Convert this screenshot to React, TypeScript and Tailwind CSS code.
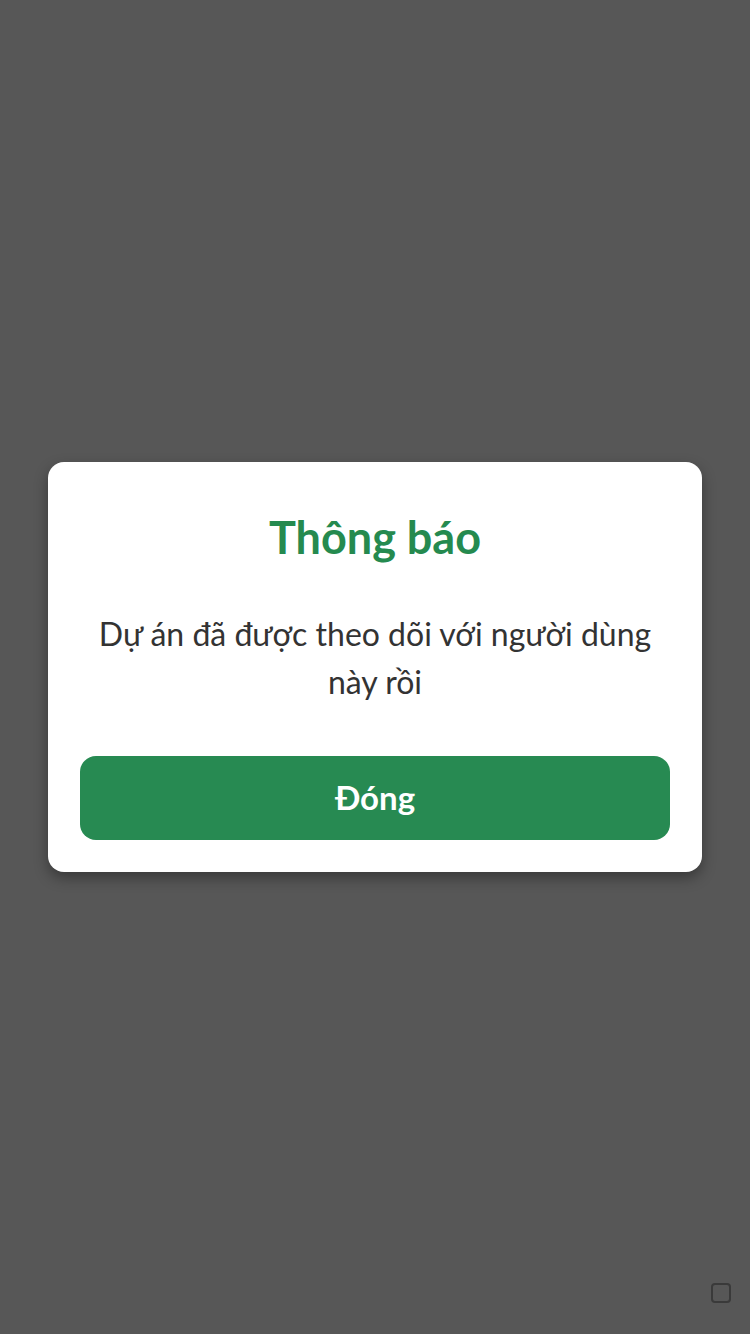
export default function App() {
  return (
    <div className="min-h-[1334px] w-full bg-[#575757] flex flex-col items-center justify-center relative font-['Lato','Noto_Sans',sans-serif]">
      {/* Dialog */}
      <div className="w-[654px] bg-white rounded-2xl shadow-[0_6px_14px_rgba(0,0,0,0.35)] px-8 pt-[50px] pb-8 flex flex-col items-center">
        <h2 className="text-[45px] leading-[50px] font-bold text-[#258a4f]">Thông báo</h2>
        <p className="mt-[48px] text-center text-[32px] leading-[48px] text-[#333333]">
          Dự án đã được theo dõi với người dùng này rồi
        </p>
        <button className="mt-[50px] w-full h-[84px] rounded-2xl bg-[#278a52] text-white text-[33px] font-bold">
          Đóng
        </button>
      </div>

      {/* Small corner box */}
      <div className="absolute right-[19px] bottom-[31px] w-5 h-5 rounded border-2 border-[#3a3a3a]" />
    </div>
  );
}
